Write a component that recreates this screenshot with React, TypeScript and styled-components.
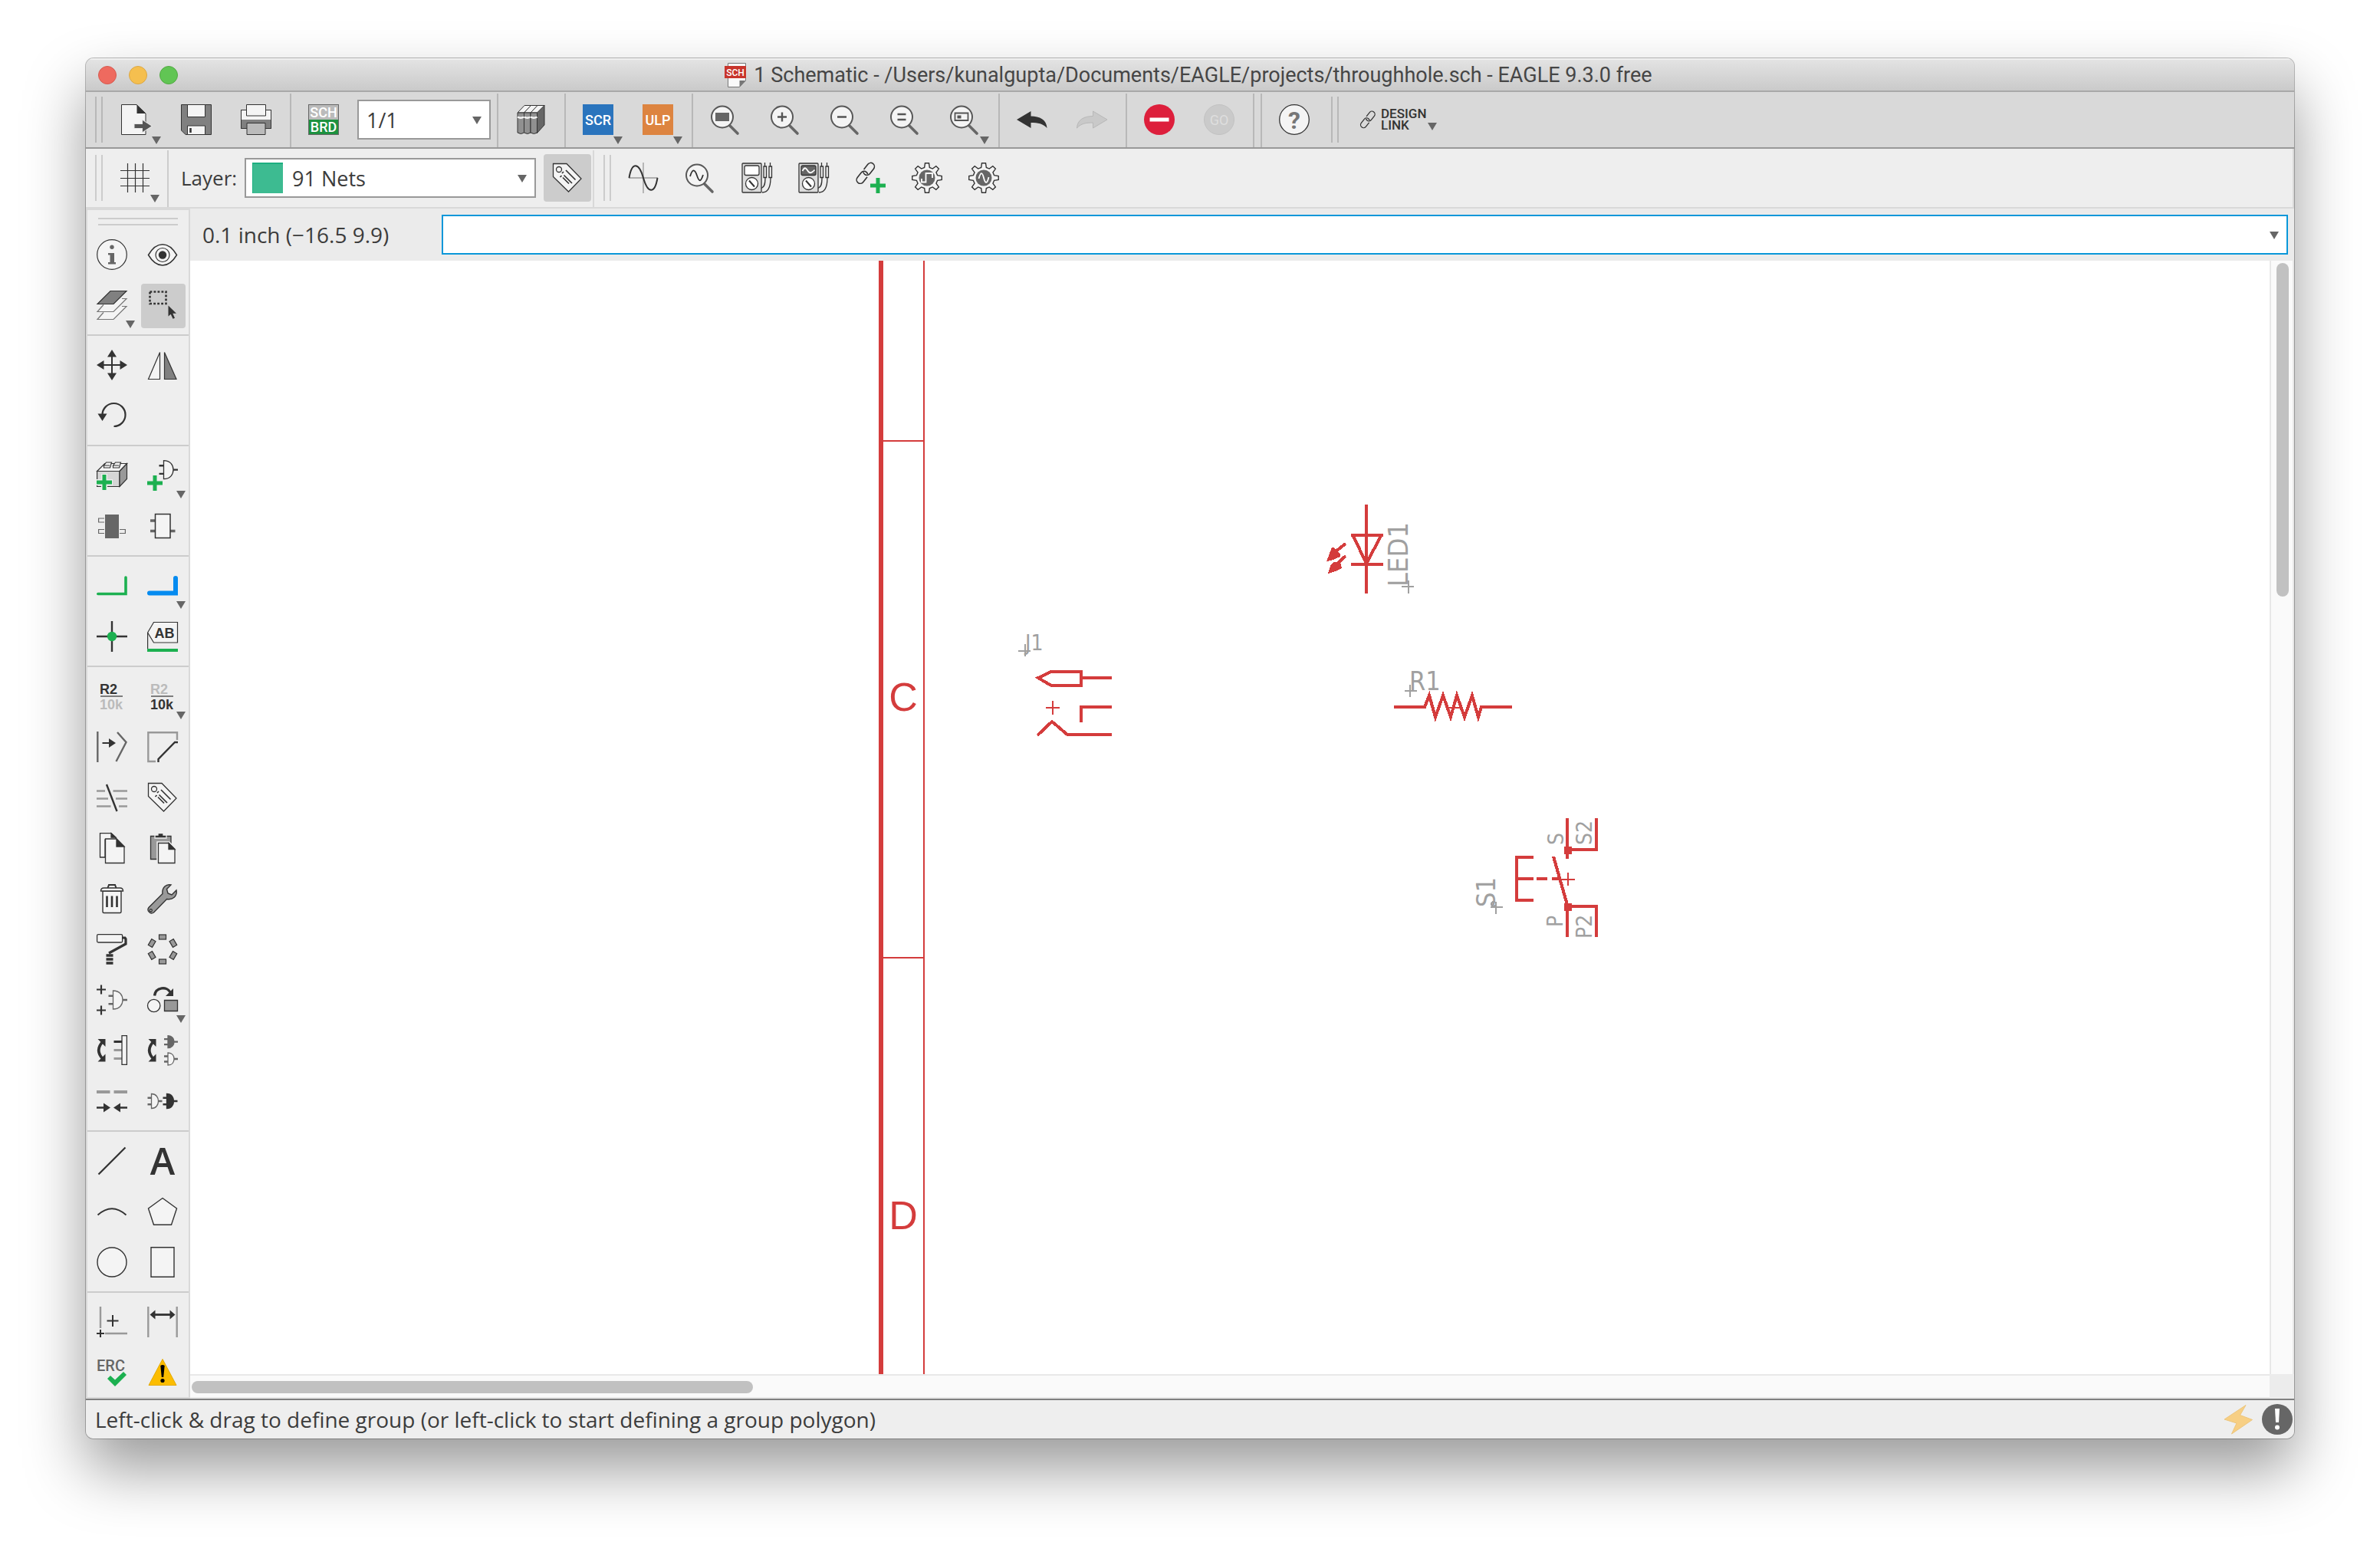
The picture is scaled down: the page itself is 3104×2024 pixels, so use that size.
import React from "react";
import styled, { createGlobalStyle, css } from "styled-components";

const UI_FONT = `"Open Sans", "Noto Sans", sans-serif`;
const TITLE_FONT = `Roboto, "Open Sans", sans-serif`;

const INK = "#333";
const MID = "#666";
const GREY = "#999";
const PAPER = "#f4f4f4";
const GREEN = "#1cb050";
const NET_RED = "#d43c3c";
const NAME_GREY = "#a0a0a0";

const GlobalStyle = createGlobalStyle`
  *, *::before, *::after { box-sizing: border-box; }
  body { margin: 0; background: #fff; font-family: ${UI_FONT}; color: #3c3c3c; }
  button, input, select { font: inherit; color: inherit; margin: 0; }
`;

/* ---------- window ---------- */

const Desktop = styled.div`
  padding: 76px 112px 148px;
`;

const Window = styled.main`
  display: flex;
  flex-direction: column;
  overflow: hidden;
  border-radius: 10px;
  background: #ececec;
  box-shadow: 0 0 0 1px rgba(0, 0, 0, 0.26), 0 40px 80px rgba(0, 0, 0, 0.4);
`;

const TitleBar = styled.header`
  display: grid;
  grid-template-columns: 1fr auto 1fr;
  align-items: center;
  height: 44px;
  padding: 2px 20px 0 16px;
  background: linear-gradient(#e4e4e4, #cacaca);
  border-bottom: 2px solid #a9a9a9;
  box-shadow: inset 0 2px 0 #f0f0f0;
`;

const TrafficLights = styled.div`
  display: flex;
  gap: 16px;
`;

const TrafficLight = styled.button<{ $fill: string; $edge: string }>`
  width: 24px;
  height: 24px;
  padding: 0;
  border-radius: 50%;
  background: ${(p) => p.$fill};
  border: 1px solid ${(p) => p.$edge};
`;

const Title = styled.h1`
  display: flex;
  align-items: center;
  gap: 10px;
  margin: 0;
  font: 400 27px/36px ${TITLE_FONT};
  color: #464646;
  white-space: nowrap;
`;

/* ---------- toolbars ---------- */

const ActionBar = styled.div`
  display: flex;
  align-items: center;
  height: 74px;
  background: #d9d9d9;
  border-bottom: 2px solid #999;
  color: #b8b8b8;
`;

const ParameterBar = styled.div`
  display: flex;
  align-items: center;
  height: 78px;
  background: #eee;
  border: 2px solid #d9d9d9;
  border-top: 0;
  border-left-width: 0;
  color: #ccc;
`;

const Grip = styled.span`
  flex: none;
  width: 10px;
  height: 60px;
  margin-left: 12px;
  border: solid currentColor;
  border-width: 0 2px;
`;

const Rule = styled.span`
  flex: none;
  align-self: stretch;
  width: 2px;
  margin-top: 2px;
  background: currentColor;
`;

const SectionRule = styled(Rule)`
  margin-left: 2px;
  background: #d9d9d9;
`;

const ButtonGroup = styled.div<{ $gap?: number }>`
  display: flex;
  align-items: center;
  gap: ${(p) => p.$gap ?? 38}px;
  padding: 0 24px 0 22px;
`;

const HelpGroup = styled(ButtonGroup)`
  padding-right: 16px;
`;

const FirstGroup = styled(ButtonGroup)`
  padding-left: 24px;
`;

const GridGroup = styled(ButtonGroup)`
  padding-right: 22px;
`;

const SheetGroup = styled(ButtonGroup)`
  padding-right: 8px;
`;

const Spacer = styled.span`
  width: 8px;
`;

const LayerGroup = styled.div`
  display: flex;
  align-items: center;
  gap: 10px;
  padding-left: 16px;
`;

const FieldLabel = styled.label`
  font-size: 26px;
  line-height: 36px;
  color: #3c3c3c;
`;

const ToolButton = styled.button<{ $pressed?: boolean }>`
  position: relative;
  flex: none;
  width: 40px;
  height: 40px;
  padding: 0;
  border: 0;
  background: none;

  svg { display: block; position: relative; }

  ${(p) => p.$pressed && css`
    &::before {
      content: "";
      position: absolute;
      inset: -8px -10px -10px -8px;
      border-radius: 4px;
      background: #ccc;
    }
  `}
`;

const TagButton = styled.button`
  display: grid;
  place-items: center;
  width: 62px;
  height: 62px;
  padding: 0;
  border: 0;
  border-radius: 4px;
  background: #ccc;
`;

const Caret = styled.span<{ $x?: number; $y?: number }>`
  position: absolute;
  left: ${(p) => p.$x ?? 40}px;
  top: ${(p) => p.$y ?? 42}px;
  border: solid transparent;
  border-width: 10px 6px 0;
  border-top-color: ${MID};
  pointer-events: none;
`;

const SelectBox = styled.div<{ $width: number }>`
  position: relative;
  width: ${(p) => p.$width}px;
  height: 52px;
`;

const SelectField = styled.select<{ $indent: number }>`
  appearance: none;
  width: 100%;
  height: 100%;
  padding: 0 40px 0 ${(p) => p.$indent}px;
  border: 2px solid #999;
  border-radius: 0;
  background: #fff;
  font-size: 27px;
  color: #3c3c3c;
`;

const FieldCaret = styled(Caret)`
  left: auto;
  right: 12px;
  top: 22px;
`;

const Swatch = styled.span`
  position: absolute;
  left: 10px;
  top: 6px;
  width: 40px;
  height: 40px;
  background: #3dbb91;
  border: solid #1caf80;
  border-width: 2px 0 0 1px;
  pointer-events: none;
`;

const DesignLink = styled.button`
  position: relative;
  display: flex;
  align-items: center;
  gap: 5px;
  margin-left: 26px;
  padding: 0;
  border: 0;
  background: none;
  font: 500 17px/15px ${TITLE_FONT};
  text-align: left;
  color: ${INK};
`;

/* ---------- work area ---------- */

const Workspace = styled.div`
  display: flex;
`;

const Palette = styled.nav`
  flex: none;
  width: 136px;
  padding-top: 10px;
  background: #eee;
  border: 2px solid #d9d9d9;
`;

const PaletteGrip = styled.span`
  display: block;
  width: 104px;
  height: 10px;
  margin: 0 14px;
  border: solid #ccc;
  border-width: 2px 0;
`;

const PaletteGroup = styled.div`
  display: grid;
  grid-template-columns: 40px 40px;
  gap: 26px;
  padding: 18px 12px;

  & + & { border-top: 2px solid #ccc; }
  &:last-child { padding-bottom: 12px; }
`;

const Editor = styled.section`
  flex: 1;
  min-width: 0;
  display: flex;
  flex-direction: column;
`;

const CommandRow = styled.div`
  display: flex;
  align-items: center;
  height: 68px;
  padding-right: 8px;
  background: #ebebeb;
`;

const Coordinates = styled.output`
  flex: none;
  width: 328px;
  padding-left: 16px;
  font-size: 28px;
  line-height: 68px;
`;

const CommandBox = styled.div`
  position: relative;
  flex: 1;
  height: 52px;
`;

const CommandInput = styled.input`
  width: 100%;
  height: 100%;
  padding: 0 40px 0 10px;
  border: 2px solid #0a97d9;
  border-radius: 0;
  outline: 0;
  background: #fff;
  font-size: 27px;
`;

const Viewport = styled.div`
  flex: 1;
  display: grid;
  grid-template-columns: 1fr 32px;
  grid-template-rows: 1fr 32px;
`;

const Canvas = styled.div`
  position: relative;
  background: #fff;
`;

const Drawing = styled.svg`
  position: absolute;
  inset: 0;
  width: 100%;
  height: 100%;
`;

const VerticalTrack = styled.div`
  padding: 3px 5px 0 7px;
  background: #fafafa;
  border: solid #e8e8e8;
  border-width: 0 2px;
`;

const HorizontalTrack = styled.div`
  padding: 7px 0 0 2px;
  background: #fafafa;
  border: solid #e8e8e8;
  border-width: 2px 0;
`;

const Thumb = styled.div<{ $vertical?: boolean }>`
  width: ${(p) => (p.$vertical ? "16px" : "27%")};
  height: ${(p) => (p.$vertical ? "30%" : "16px")};
  border-radius: 8px;
  background: #c1c1c1;
`;

const StatusBar = styled.footer`
  display: flex;
  align-items: center;
  gap: 10px;
  height: 52px;
  padding: 0 2px 0 12px;
  background: #eee;
  border-top: 2px solid #808080;
  font-size: 28px;
  line-height: 36px;
`;

const StatusText = styled.span`
  flex: 1;
  white-space: nowrap;
`;

/* ---------- icons ---------- */

const IconSvg = styled.svg`
  overflow: visible;
`;

const Plus = ({ x, y, r = 10, w = 5, color = GREEN }: { x: number; y: number; r?: number; w?: number; color?: string }) => (
  <path d={`M${x - r} ${y}h${2 * r}M${x} ${y - r}v${2 * r}`} stroke={color} strokeWidth={w} fill="none" />
);

/* AND gate: body of width w and height h at x, two input pins and one output pin */
const Gate = ({ x, y, w = 12.5, h = 24, body = PAPER, line = MID, pin = 6 }: { x: number; y: number; w?: number; h?: number; body?: string; line?: string; pin?: number }) => (
  <g stroke={line}>
    <path
      d={`M${x - pin} ${y + h * 0.28}H${x}M${x - pin} ${y + h * 0.72}H${x}M${x + w} ${y + h / 2}h${pin}`}
      strokeWidth="2.4"
    />
    <path
      d={`M${x} ${y}c${w * 0.7} 0 ${w} ${h * 0.25} ${w} ${h / 2}s${-w * 0.3} ${h / 2} ${-w} ${h / 2}z`}
      fill={body}
      strokeWidth="1.3"
    />
  </g>
);

const Lens = ({ children }: { children?: React.ReactNode }) => (
  <>
    <path d="M26 28l10 10" stroke={MID} strokeWidth="3.6" strokeLinecap="round" />
    <circle cx="16" cy="16.5" r="14" fill={PAPER} stroke="#585858" strokeWidth="2" />
    {children}
  </>
);

const gearPath = (() => {
  const pts: string[] = [];
  for (let i = 0; i < 8; i++) {
    const a = (i * Math.PI) / 4 - Math.PI / 2;
    const corners: [number, number][] = [
      [14, -0.24],
      [19.4, -0.13],
      [19.4, 0.13],
      [14, 0.24],
    ];
    corners.forEach(([r, d]) => pts.push(`${(20 + r * Math.cos(a + d)).toFixed(2)} ${(20 + r * Math.sin(a + d)).toFixed(2)}`));
  }
  return `M${pts.join("L")}Z`;
})();

const Gear = ({ children }: { children: React.ReactNode }) => (
  <>
    <path d={gearPath} fill={PAPER} stroke={INK} strokeWidth="1.4" />
    <circle cx="20" cy="20" r="10.5" fill={MID} />
    {children}
  </>
);

const Meter = ({ digital }: { digital?: boolean }) => (
  <g fill="none" stroke={INK} strokeWidth="1.3">
    <rect x="1" y="1" width="25" height="38" rx="1" fill="#dcdcdc" />
    <rect x="4" y="4" width="19" height="12.5" rx="2" fill={digital ? MID : "#fff"} />
    {digital && <path d="M5.5 11c4-8 6-1 8 1s4 2 8-2.5" stroke="#fff" strokeWidth="1.8" />}
    <circle cx="13.5" cy="27.5" r="8" fill="#fff" />
    <path d="M10 23.5l7 8" strokeWidth="2" />
    <path d="M30.5 0v5M29 5h3.500v14.500H29zM37.500 0v5M36 5h3.500v14.500H36z" />
    <path d="M31 20c0 8-1 12-5 13.500M38 20c0 12-3 19-11 19" />
  </g>
);

const Chain = () => (
  <g transform="rotate(-52 14 14)" fill="none" stroke={INK} strokeWidth="1.600">
    <path d="M11.500 18.500H3a4.800 4.800 0 0 1 0-9.600h8a4.800 4.800 0 0 1 4.800 4.800q0 2-1.300 3.300" />
    <path d="M16.500 9H25a4.800 4.800 0 0 1 0 9.600h-8a4.800 4.800 0 0 1-4.800-4.800q0-2 1.300-3.300" />
  </g>
);

const RoundArrow = () => (
  <g fill={INK}>
    <path d="M8.500 8Q-3 19.500 8.500 31.500" fill="none" stroke={INK} strokeWidth="3.6" />
    <path d="M1.500 5h10v10zM1.500 34.500h10v-10z" />
  </g>
);

const Badge = ({ fill, text }: { fill: string; text: string }) => (
  <>
    <rect width="40" height="40" fill={fill} />
    <text x="20" y="26.5" fontFamily={TITLE_FONT} fontWeight="500" fontSize="18" textAnchor="middle" fill="#fff">{text}</text>
  </>
);

const NameValue = ({ top, bottom }: { top: string; bottom: string }) => (
  <g fontFamily="'Liberation Sans', Arial, sans-serif" fontWeight="700" fontSize="18">
    <text x="4" y="16.5" fill={top}>R2</text>
    <path d="M5 20h29" stroke={INK} strokeWidth="1.2" />
    <text x="4" y="37" fill={bottom}>10k</text>
  </g>
);

const tagShape = (
  <g stroke={INK} fill="none">
    <path d="M1.500 1.500H19L38 21 21.500 38 1.500 18.500z" fill={PAPER} strokeWidth="1.3" />
    <circle cx="9" cy="9" r="3.5" strokeWidth="1.3" />
    <path d="M18 10l12.500 12.500M13 14l2-2M15.500 16.500L26 27M10.500 19l2-2M14 19.500l8 8" strokeWidth="1.7" />
  </g>
);

const undoPath = "M0 20L18.500 9v6.500C30 15.500 39 20 39.500 31 34 25 28 24 18.500 24v7z";

const icons: Record<string, React.ReactNode> = {
  open: (
    <>
      <path d="M.5.5H20L32 12v27.500H.5z" fill={PAPER} stroke={INK} />
      <path d="M20.500.5V12H32z" fill={INK} />
      <path d="M17.500 26H28v-5l11.500 7.500L28 36v-5H17.500z" fill="#555" stroke="#e6e6e6" strokeWidth="2" paintOrder="stroke" />
    </>
  ),
  save: (
    <g stroke={INK}>
      <path d="M.5.5h39v39H6L.5 34z" fill="#808080" />
      <path d="M8.500.5h23v16h-23zM8.500 28h23v11.500h-23z" fill={PAPER} />
      <path d="M12.500 31v6" strokeWidth="2.6" />
    </g>
  ),
  print: (
    <g stroke={INK}>
      <path d="M.5 7.500h39v24H.5z" fill={PAPER} />
      <path d="M.5 20h39v11.500H.5z" fill="#808080" stroke="none" />
      <path d="M.5 7.500h39v24H.5z" fill="none" />
      <path d="M7.500.5h25V15h-25z" fill={PAPER} />
      <path d="M8 24.500h24v15H8z" fill="#bbb" />
    </g>
  ),
  board: (
    <>
      <path d="M.5.5h39V20H.5z" fill="#bbb" />
      <path d="M.5 20h39v19.500H.5z" fill="#1d9240" />
      <rect x=".5" y=".5" width="39" height="39" fill="none" stroke={MID} />
      <g fontFamily={TITLE_FONT} fontWeight="500" fontSize="18" fill="#fff" textAnchor="middle">
        <text x="20" y="17">SCH</text>
        <text x="20" y="36">BRD</text>
      </g>
    </>
  ),
  library: (
    <g stroke={INK}>
      <path d="M28 11l10-10v26L28 38z" fill={MID} />
      {[3, 11.5, 20].map((x) => (
        <g key={x}>
          <path d={`M${x} 11l9-9.500h9L${x + 8.5} 11z`} fill={PAPER} />
          <path d={`M${x} 11h8.500v26q-4 3-8.500 0z`} fill="#909090" />
          <path d={`M${x} 16.500q4 2.500 8.500 0`} stroke={PAPER} strokeWidth="2.5" fill="none" />
        </g>
      ))}
    </g>
  ),
  scr: <Badge fill="#2a74bd" text="SCR" />,
  ulp: <Badge fill="#dd8440" text="ULP" />,
  zoomFit: <Lens><path d="M7 11h18v11H7z" fill={MID} /></Lens>,
  zoomIn: <Lens><Plus x={16} y={16.5} r={6} w={2.4} color="#555" /></Lens>,
  zoomOut: <Lens><path d="M10 16.500h12" stroke="#555" strokeWidth="2.4" /></Lens>,
  zoomRedraw: <Lens><path d="M10.500 13h11M10.500 20h11" stroke="#555" strokeWidth="2.4" /></Lens>,
  zoomSelect: (
    <Lens>
      <path d="M7.500 11.500h17v9.500h-17z" fill={PAPER} stroke="#555" strokeWidth="1.8" />
      <path d="M10.500 14.500h5v4h-5z" fill="#555" />
    </Lens>
  ),
  undo: <path d={undoPath} fill={INK} />,
  redo: <path d={undoPath} transform="matrix(-1 0 0 1 40 0)" fill="#c9c9c9" stroke="#b8b8b8" />,
  stop: (
    <>
      <circle cx="20" cy="20" r="20" fill="#dd1f3c" />
      <path d="M7.500 20h25" stroke="#fff" strokeWidth="5" />
    </>
  ),
  go: (
    <>
      <circle cx="20" cy="20" r="19.5" fill="#cacaca" stroke="#c2c2c2" />
      <text x="20" y="27" fontFamily={TITLE_FONT} fontSize="18" textAnchor="middle" fill="#dedede">GO</text>
    </>
  ),
  help: (
    <>
      <circle cx="20" cy="20" r="19.3" fill={PAPER} stroke={INK} strokeWidth="1.3" />
      <text x="20" y="31.5" fontFamily={TITLE_FONT} fontWeight="700" fontSize="32" textAnchor="middle" fill="#777">?</text>
    </>
  ),
  grid: <path d="M10.500 1v38M20.500 1v38M30.500 1v38M1 10.500h38M1 20.500h38M1 30.500h38" stroke={INK} strokeWidth="1.2" />,
  tag: tagShape,
  sine: (
    <g fill="none">
      <path d="M20 0v40M1 20h38" stroke={GREY} strokeWidth="1.3" />
      <path d="M1.500 20C5-1 14-1 20 20s15 21 18.500 0" stroke={INK} strokeWidth="2" />
    </g>
  ),
  probe: <Lens><path d="M7 18c3-10 6-10 9-1s5 8 8-1" fill="none" stroke={INK} strokeWidth="1.8" /></Lens>,
  meter: <Meter />,
  scope: <Meter digital />,
  addLink: (
    <>
      <Chain />
      <Plus x={30} y={30} />
    </>
  ),
  gearDigital: <Gear><path d="M13 21v4.500h5.500V14h4v0h4.500v6h0" fill="none" stroke="#fff" strokeWidth="1.8" /></Gear>,
  gearAnalog: <Gear><path d="M13.500 21c2.500-9 4.500-9 6.500-1s4.500 8 6.500-1" fill="none" stroke="#fff" strokeWidth="1.8" /></Gear>,

  info: (
    <>
      <circle cx="20" cy="20" r="19.3" fill={PAPER} stroke={INK} strokeWidth="1.2" />
      <g fill={MID}>
        <circle cx="20" cy="10.2" r="2.7" />
        <path d="M15 18h8v12h2v2.500H15V30h2.500v-9.500H15z" />
      </g>
    </>
  ),
  show: (
    <g stroke={INK} fill="none">
      <path d="M1.500 20.500C7 11 13 6.700 20 6.700s13 4.300 18.500 13.800C33 29.700 27 34 20 34S7 29.700 1.500 20.500z" fill={PAPER} strokeWidth="1.5" />
      <circle cx="20" cy="20.5" r="9" strokeWidth="1.2" />
      <circle cx="20" cy="20.5" r="5.2" fill={INK} stroke="none" />
    </g>
  ),
  layers: (
    <g stroke="#777" strokeWidth="1.2" fill={PAPER}>
      <path d="M9 29.500L1 38.500h21l17-17h-6" />
      <path d="M9 19.500L1 28.500h21l17-17h-6" />
      <path d="M1 18.500l17-17h21l-17 17z" fill="#808080" stroke={INK} />
    </g>
  ),
  group: (
    <>
      <rect x="3.5" y="2.5" width="21" height="15.5" fill="none" stroke={INK} strokeWidth="2.6" strokeDasharray="2.8 2.2" />
      <path d="M27.500 20.500v14l3.200-2.800 2.800 6.100 2.500-1-2.700-6H38z" fill={INK} />
    </>
  ),
  move: (
    <>
      <path d="M20 6v28M6 20h28" stroke={INK} strokeWidth="2" />
      <path d="M20 0l6 9.500H14zM20 40l6-9.500H14zM0 20l9.500-6v12zM40 20l-9.500-6v12z" fill={INK} />
    </>
  ),
  mirror: (
    <g stroke={INK} strokeWidth="1.2">
      <path d="M1.500 38.500h15v-35z" fill={PAPER} />
      <path d="M38 38.500H22.500v-35z" fill="#808080" />
    </g>
  ),
  rotate: (
    <>
      <path d="M22.500 34A15 15 0 1 0 7.500 19" fill="none" stroke={INK} strokeWidth="2.2" />
      <path d="M1.500 17.500h12L7.500 27z" fill={INK} />
    </>
  ),
  addPart: (
    <>
      <g stroke={INK} strokeWidth="1.2">
        <path d="M.6 14.500h29.400v20H.6z" fill="#d6d6d6" />
        <path d="M.6 14.500l10-10h29l-9.600 10z" fill={PAPER} />
        <path d="M30 14.500l9.500-10v20L30 34.500z" fill={GREY} />
        <path d="M9.500 7l3-4h7l-2 7h-8zM21.500 7l3-4h7l-2 7h-8zM9.500 7h7.500M21.500 7h7.500" fill={PAPER} />
      </g>
      <Plus x={10} y={29} w={8} r={11} color="#eee" />
      <Plus x={10} y={29} />
    </>
  ),
  addGate: (
    <>
      <Gate x={21.5} y={0.6} line={INK} />
      <Plus x={10} y={30} />
    </>
  ),
  chipDark: (
    <g stroke={MID} strokeWidth="1.2" fill="none">
      <path d="M10 10H2.600v5H10M10 24.500H2.600v5H10M30 24.500h7.400v5H30" />
      <path d="M11 5h18v31H11z" fill={MID} stroke="none" />
    </g>
  ),
  chipLight: (
    <>
      <path d="M4 13h6.500M4 26.500h6.500M30 26.500h6.500" stroke={MID} strokeWidth="3.6" />
      <path d="M10.500 4.500H30v31H10.500z" fill={PAPER} stroke={INK} strokeWidth="1.5" />
    </>
  ),
  net: <path d="M1.800 30.500H38V9" fill="none" stroke={GREEN} strokeWidth="3.6" strokeLinecap="round" />,
  bus: <path d="M3 29.500h34V10" fill="none" stroke="#058bf0" strokeWidth="6" strokeLinecap="round" />,
  junction: (
    <>
      <Plus x={20} y={20} r={20} w={2.4} color={INK} />
      <circle cx="20" cy="20" r="6.2" fill={GREEN} />
    </>
  ),
  label: (
    <>
      <path d="M8.500 1.500h31v26.500h-31L.6 15z" fill={PAPER} stroke={INK} strokeWidth="1.2" />
      <path d="M.6 15v21" stroke={INK} strokeWidth="1.2" />
      <path d="M0 38h40" stroke={GREEN} strokeWidth="4" />
      <text x="22.5" y="22" fontFamily="'Liberation Sans', Arial, sans-serif" fontWeight="700" fontSize="18" textAnchor="middle" fill={INK}>AB</text>
    </>
  ),
  name: <NameValue top={INK} bottom="#bbb" />,
  value: <NameValue top="#bbb" bottom={INK} />,
  smash: (
    <g fill="none" stroke={MID} strokeWidth="2.4">
      <path d="M1.300 0v40M27 1l11.500 13L25.500 39" />
      <path d="M7.500 15H17" stroke={INK} strokeWidth="2" />
      <path d="M16 9l9 6-9 6z" fill={INK} stroke="none" />
    </g>
  ),
  miter: (
    <g fill="none" strokeWidth="2.4">
      <path d="M39 11V1.300H1.300V39H11" stroke={GREY} />
      <path d="M14.500 40v-4L36 14h4" stroke={INK} />
    </g>
  ),
  split: (
    <g strokeWidth="2.4">
      <path d="M0 11.500h11M21.500 11.500H40M0 21.500h15M25 21.500h15M0 31.500h18.500M29 31.500h11" stroke={GREY} />
      <path d="M13 3l13.500 35" stroke={INK} />
    </g>
  ),
  copy: (
    <g fill={PAPER} stroke={INK} strokeWidth="1.3">
      <path d="M10 32H4.500V.7H19l6 5.500V9H11v23z" />
      <path d="M19 .7v5.500h6z" fill={INK} />
      <path d="M11.500 8H26l10 10v21.500H11.500z" />
      <path d="M26 8v10h10z" fill={INK} />
    </g>
  ),
  paste: (
    <g stroke={INK} strokeWidth="1.3">
      <path d="M4.500 4.500H31V34.500H4.500z" fill={GREY} />
      <path d="M10 7V3h4V.5h7V3h4v4z" fill={INK} stroke="#eee" />
      <path d="M14.500 13.500H28l8 8v18H14.500z" fill={PAPER} stroke="#eee" strokeWidth="4.5" />
      <path d="M14.500 13.500H28l8 8v18H14.500z" fill={PAPER} />
      <path d="M28 13.500v8h8z" fill={INK} />
    </g>
  ),
  trash: (
    <g fill={PAPER} stroke={INK} strokeWidth="1.4">
      <path d="M14.500 6l1.500-4h8l1.500 4" fill="none" strokeWidth="2" />
      <path d="M8 10v27q0 1.500 1.500 1.500h21q1.500 0 1.500-1.500V10z" />
      <path d="M5.500 10q0-4 4-4h21q4 0 4 4z" />
      <path d="M13.500 16.500V31M20 16.500V31M26.500 16.500V31" strokeWidth="2.6" />
    </g>
  ),
  wrench: (
    <g stroke={INK} strokeWidth="1.4">
      <path d="M31 2C25 .5 19 5 20 13.500L2 31.500c-3 4 2 9.500 6.500 6.500L25.500 20.500C33 22 39.500 17 38 9l-6 6-5-2-1.500-5.500z" fill={GREY} />
      <circle cx="4.8" cy="35.2" r="1.5" fill={PAPER} />
    </g>
  ),
  paint: (
    <g stroke={INK}>
      <rect x=".6" y=".6" width="33" height="10.4" rx="1.5" fill={PAPER} strokeWidth="1.3" />
      <path d="M34 5h3l1 1.500V13L16 25" fill="none" strokeWidth="3.2" />
      <path d="M12.500 28h9M12.500 33h9M12.500 38h9" strokeWidth="3.6" />
    </g>
  ),
  ring: (
    <g fill={GREY} stroke={INK} strokeWidth="1.2">
      {[0, 60, 120, 180, 240, 300].map((a) => (
        <rect key={a} x="15.5" y="1" width="9" height="6" transform={`rotate(${a} 20 20)`} />
      ))}
    </g>
  ),
  addInvoke: (
    <>
      <Plus x={6} y={6.5} r={6} w={2.2} color={INK} />
      <Plus x={6} y={33.5} r={6} w={2.2} color={INK} />
      <Gate x={21.5} y={8} />
    </>
  ),
  replace: (
    <g stroke={INK}>
      <circle cx="8.7" cy="27.5" r="8.2" fill={PAPER} strokeWidth="1.3" />
      <path d="M22.500 20.500h17v14h-17z" fill={GREY} strokeWidth="1.3" />
      <path d="M9.500 14.500C11 3 26 2 30 10" fill="none" strokeWidth="3.4" />
      <path d="M34 5v10H24z" fill={INK} stroke="none" />
    </g>
  ),
  pinSwap: (
    <>
      <RoundArrow />
      <path d="M22.500 8.500H33" stroke={INK} strokeWidth="3" />
      <path d="M22.500 19.500H33M22.500 30.500H33" stroke={GREY} strokeWidth="3" />
      <path d="M33 .7h6.400v37.600H33z" fill={PAPER} stroke={INK} strokeWidth="1.3" />
    </>
  ),
  gateSwap: (
    <>
      <RoundArrow />
      <Gate x={27} y={0.6} w={8} h={16} body={MID} pin={5} />
      <Gate x={27} y={23} w={8} h={16} pin={5} />
    </>
  ),
  optimize: (
    <>
      <path d="M0 8h17.500M22.500 8H40" stroke={GREY} strokeWidth="4" />
      <path d="M0 28.500h10M30 28.500h10" stroke={INK} strokeWidth="2.4" />
      <path d="M9 22.500l9 6-9 6zM31 22.500l-9 6 9 6z" fill={INK} />
    </>
  ),
  gates: (
    <>
      <Gate x={5.5} y={10.5} w={9} h={19} pin={5} />
      <Gate x={25.5} y={10.5} w={9} h={19} body={INK} line={INK} pin={5} />
    </>
  ),
  line: <path d="M2.500 37.500l35-35" stroke={INK} strokeWidth="2.2" />,
  text: <text x="20" y="37.5" fontFamily={UI_FONT} fontWeight="600" fontSize="49" textAnchor="middle" fill={INK}>A</text>,
  arc: <path d="M1.500 24.500Q20 8 38.500 24.500" fill="none" stroke={INK} strokeWidth="2" />,
  polygon: <path d="M20 2.500L38.500 16l-7 21.300h-23L1.500 16z" fill={PAPER} stroke={INK} strokeWidth="1.4" />,
  circle: <circle cx="20" cy="20" r="19" fill={PAPER} stroke={INK} strokeWidth="1.4" />,
  rect: <path d="M5 .7h30v38.600H5z" fill={PAPER} stroke={INK} strokeWidth="1.4" />,
  mark: (
    <>
      <path d="M5 0v28M11 35h29" stroke={GREY} strokeWidth="2.4" />
      <Plus x={5} y={35} r={5} w={2} color={INK} />
      <Plus x={21} y={18.5} r={7.5} w={2} color={INK} />
    </>
  ),
  dimension: (
    <>
      <path d="M1.300 0v40M38.700 0v40" stroke={GREY} strokeWidth="2.4" />
      <path d="M9 10.500h22" stroke={INK} strokeWidth="2.8" />
      <path d="M3.500 10.500l7-6v12zM36.500 10.500l-7-6v12z" fill={INK} />
    </>
  ),
  erc: (
    <>
      <text x="0" y="17.5" fontFamily={TITLE_FONT} fontWeight="500" fontSize="20" fill={MID}>ERC</text>
      <path d="M14 28l4-4 6 5.500L35 19l4 4-15 15z" fill={GREEN} />
    </>
  ),
  errors: (
    <>
      <path d="M20 2.500l18 34H2z" fill="#fcbd00" stroke="#e3a900" strokeLinejoin="round" />
      <path d="M17.300 11q2.700-2 5.400 0L21.200 26h-2.400z" />
      <circle cx="20" cy="30.5" r="2.6" />
    </>
  ),
  bolt: <path d="M29 1.500L21.500 14.500 37.500 20.500 10.500 39 17 25 1 20z" fill="#f7cf84" stroke="#ecc57c" />,
  alert: (
    <>
      <circle cx="20" cy="20" r="20" fill={MID} />
      <path d="M17 6h6l-1 18h-4z" fill="#fff" />
      <circle cx="20" cy="30.5" r="3" fill="#fff" />
    </>
  ),
};

const Icon = ({ name }: { name: string }) => (
  <IconSvg width="40" height="40" viewBox="0 0 40 40" aria-hidden="true">{icons[name]}</IconSvg>
);

type Tool = { icon: string; label: string; menu?: boolean; pressed?: boolean; disabled?: boolean };

const ToolbarTool = ({ icon, label, menu, disabled }: Tool) => (
  <ToolButton type="button" aria-label={label} disabled={disabled}>
    <Icon name={icon} />
    {menu && <Caret />}
  </ToolButton>
);

const PaletteTool = ({ icon, label, menu, pressed }: Tool) => (
  <ToolButton type="button" aria-label={label} aria-pressed={pressed} $pressed={pressed}>
    <Icon name={icon} />
    {menu && <Caret $x={38} $y={40} />}
  </ToolButton>
);

const fileTools: Tool[] = [
  { icon: "open", label: "Open", menu: true },
  { icon: "save", label: "Save" },
  { icon: "print", label: "Print" },
];
const scriptTools: Tool[] = [
  { icon: "scr", label: "Run script", menu: true },
  { icon: "ulp", label: "Run ULP", menu: true },
];
const zoomTools: Tool[] = [
  { icon: "zoomFit", label: "Zoom to fit" },
  { icon: "zoomIn", label: "Zoom in" },
  { icon: "zoomOut", label: "Zoom out" },
  { icon: "zoomRedraw", label: "Redraw" },
  { icon: "zoomSelect", label: "Zoom select", menu: true },
];
const historyTools: Tool[] = [
  { icon: "undo", label: "Undo" },
  { icon: "redo", label: "Redo", disabled: true },
];
const runTools: Tool[] = [
  { icon: "stop", label: "Stop" },
  { icon: "go", label: "Go", disabled: true },
];
const simulationTools: Tool[] = [
  { icon: "sine", label: "Source setup" },
  { icon: "probe", label: "Add probe" },
  { icon: "meter", label: "Voltage probe" },
  { icon: "scope", label: "Phase probe" },
  { icon: "addLink", label: "Map model" },
  { icon: "gearDigital", label: "Digital simulation" },
  { icon: "gearAnalog", label: "Analog simulation" },
];

const paletteGroups: Tool[][] = [
  [
    { icon: "info", label: "Info" },
    { icon: "show", label: "Show" },
    { icon: "layers", label: "Layers", menu: true },
    { icon: "group", label: "Group", pressed: true },
  ],
  [
    { icon: "move", label: "Move" },
    { icon: "mirror", label: "Mirror" },
    { icon: "rotate", label: "Rotate" },
  ],
  [
    { icon: "addPart", label: "Add part" },
    { icon: "addGate", label: "Add gate", menu: true },
    { icon: "chipDark", label: "Add module" },
    { icon: "chipLight", label: "Add port" },
  ],
  [
    { icon: "net", label: "Net" },
    { icon: "bus", label: "Bus", menu: true },
    { icon: "junction", label: "Junction" },
    { icon: "label", label: "Label" },
  ],
  [
    { icon: "name", label: "Name" },
    { icon: "value", label: "Value", menu: true },
    { icon: "smash", label: "Slice" },
    { icon: "miter", label: "Miter" },
    { icon: "split", label: "Split" },
    { icon: "tag", label: "Attribute" },
    { icon: "copy", label: "Copy" },
    { icon: "paste", label: "Paste" },
    { icon: "trash", label: "Delete" },
    { icon: "wrench", label: "Change" },
    { icon: "paint", label: "Paint format" },
    { icon: "ring", label: "Polar array" },
    { icon: "addInvoke", label: "Invoke" },
    { icon: "replace", label: "Replace", menu: true },
    { icon: "pinSwap", label: "Pin swap" },
    { icon: "gateSwap", label: "Gate swap" },
    { icon: "optimize", label: "Optimize" },
    { icon: "gates", label: "Link gates" },
  ],
  [
    { icon: "line", label: "Line" },
    { icon: "text", label: "Text" },
    { icon: "arc", label: "Arc" },
    { icon: "polygon", label: "Polygon" },
    { icon: "circle", label: "Circle" },
    { icon: "rect", label: "Rectangle" },
  ],
  [
    { icon: "mark", label: "Mark" },
    { icon: "dimension", label: "Dimension" },
    { icon: "erc", label: "Electrical rule check" },
    { icon: "errors", label: "Errors" },
  ],
];

/* ---------- schematic ---------- */

const PartName = styled.text<{ $size: number }>`
  font: 200 ${(p) => p.$size}px "DejaVu Sans Condensed", "DejaVu Sans", sans-serif;
  fill: ${NAME_GREY};
`;

const FrameLetter = styled.text`
  font: 400 52px "Liberation Sans", Arial, sans-serif;
  fill: ${NET_RED};
  text-anchor: middle;
`;

const Upright = ({ x, y, size, children }: { x: number; y: number; size: number; children: string }) => (
  <PartName $size={size} transform={`translate(${x} ${y}) rotate(-90)`}>{children}</PartName>
);

const Schematic = () => (
  <Drawing role="img" aria-label="Schematic sheet">
    <g transform="translate(-248 -340)" fill="none" stroke={NET_RED} strokeWidth="4">
      <g shapeRendering="crispEdges">
        <path d="M1149 340v1600" strokeWidth="6" />
        <path d="M1205 340v1600M1152 575h53M1152 1249h53" strokeWidth="2" />
      </g>
      <g stroke="none">
        <FrameLetter x="1178" y="927">C</FrameLetter>
        <FrameLetter x="1178" y="1603">D</FrameLetter>
        <PartName $size={28} x="1337" y="848">J1</PartName>
        <PartName $size={34} x="1838" y="900">R1</PartName>
        <Upright x={1836} y={765} size={36}>LED1</Upright>
        <Upright x={1950} y={1183} size={34}>S1</Upright>
        <Upright x={2039} y={1102} size={28}>S</Upright>
        <Upright x={2076} y={1102} size={28}>S2</Upright>
        <Upright x={2038} y={1209} size={28}>P</Upright>
        <Upright x={2076} y={1224} size={28}>P2</Upright>
      </g>
      <g shapeRendering="crispEdges">
        <path d="M1328 849h16M1337 840v16M1828 765h16M1837 757v17M1832 901h16M1839 893v16M1944 1183h16M1951 1176v16" stroke={NAME_GREY} strokeWidth="2" />
        <circle cx="1948" cy="1179" r="3" stroke={NAME_GREY} strokeWidth="2" />

        <path d="M1410 876h-39l-17 8 17 10h39zM1410 884h40M1450 922h-40v20M1353 959l19-18 20 17h58" />
        <path d="M1364 923h18M1373 914v18" strokeWidth="2" />

        <path d="M1782 658v116M1762 698h42M1762 736h42M1765 699l17 36 19-36M1755 709l-13 10M1755 725l-12 11" />
        <path d="M1730 732l7-18h3l8 9v3l-12 5zM1732 748l3-10 4-5h9l2 8-8 4z" fill={NET_RED} stroke="none" />

        <path d="M1818 922h40l6-15 8 28 10-28 10 28 8-28 10 28 10-28 8 28 4-13h40" />
        <path d="M1889 923h16" strokeWidth="2" />

        <path d="M2044 1067v53M2044 1108h38v-41M2044 1222v-40h38v40M2026 1117l18 63" />
        <path d="M2000 1118h-22v56h22M1978 1146h22M2004 1146h14M2024 1146h12" />
        <path d="M2034 1147h20M2045 1138v17" strokeWidth="2" />
        <path d="M2040 1104h10v10h-10zM2040 1178h10v10h-10z" fill={NET_RED} stroke="none" />
      </g>
    </g>
  </Drawing>
);

const SheetIcon = () => (
  <svg width="28" height="32" viewBox="0 0 28 32" aria-hidden="true">
    <path d="M4.500.5h23V23l-8 8.500h-15z" fill="#fafafa" stroke="#777" />
    <path d="M19.500 31.500V23h8z" fill="#777" />
    <path d="M0 4h28v16H0z" fill="#c8352c" />
    <text x="14" y="16.5" fontFamily={TITLE_FONT} fontSize="12" fontWeight="500" textAnchor="middle" fill="#fff">SCH</text>
  </svg>
);

export default function App() {
  return (
    <Desktop>
      <GlobalStyle />
      <Window>
        <TitleBar>
          <TrafficLights>
            <TrafficLight type="button" aria-label="Close" $fill="#ee6a5f" $edge="#d65a50" />
            <TrafficLight type="button" aria-label="Minimize" $fill="#f5bf4f" $edge="#dba744" />
            <TrafficLight type="button" aria-label="Zoom" $fill="#61c554" $edge="#52a943" />
          </TrafficLights>
          <Title>
            <SheetIcon />
            1 Schematic - /Users/kunalgupta/Documents/EAGLE/projects/throughhole.sch - EAGLE 9.3.0 free
          </Title>
        </TitleBar>

        <ActionBar role="toolbar" aria-label="Actions">
          <Grip />
          <FirstGroup>{fileTools.map((t) => <ToolbarTool key={t.icon} {...t} />)}</FirstGroup>
          <Rule />
          <SheetGroup $gap={24}>
            <ToolbarTool icon="board" label="Switch to board" />
            <SelectBox $width={174}>
              <SelectField $indent={10} aria-label="Sheet" defaultValue="1">
                <option value="1">1/1</option>
              </SelectField>
              <FieldCaret />
            </SelectBox>
          </SheetGroup>
          <Rule />
          <ButtonGroup><ToolbarTool icon="library" label="Libraries" /></ButtonGroup>
          <Rule />
          <ButtonGroup>{scriptTools.map((t) => <ToolbarTool key={t.icon} {...t} />)}</ButtonGroup>
          <Rule />
          <ButtonGroup>{zoomTools.map((t) => <ToolbarTool key={t.icon} {...t} />)}</ButtonGroup>
          <Rule />
          <ButtonGroup>{historyTools.map((t) => <ToolbarTool key={t.icon} {...t} />)}</ButtonGroup>
          <Rule />
          <ButtonGroup>{runTools.map((t) => <ToolbarTool key={t.icon} {...t} />)}</ButtonGroup>
          <Rule />
          <Spacer />
          <Rule />
          <HelpGroup><ToolbarTool icon="help" label="Help" /></HelpGroup>
          <Grip />
          <DesignLink type="button">
            <svg width="24" height="24" viewBox="-1 -1 30 30" aria-hidden="true"><Chain /></svg>
            <span>DESIGN<br />LINK</span>
            <Caret $x={90} $y={19} />
          </DesignLink>
        </ActionBar>

        <ParameterBar role="toolbar" aria-label="Parameters">
          <Grip />
          <GridGroup><ToolbarTool icon="grid" label="Grid" menu /></GridGroup>
          <Rule />
          <LayerGroup>
            <FieldLabel htmlFor="layer">Layer:</FieldLabel>
            <SelectBox $width={380}>
              <SelectField id="layer" $indent={60} defaultValue="91">
                <option value="91">91 Nets</option>
              </SelectField>
              <Swatch />
              <FieldCaret />
            </SelectBox>
            <TagButton type="button" aria-label="Attributes" aria-pressed="true"><Icon name="tag" /></TagButton>
          </LayerGroup>
          <SectionRule />
          <Grip />
          <ButtonGroup $gap={34}>{simulationTools.map((t) => <ToolbarTool key={t.icon} {...t} />)}</ButtonGroup>
        </ParameterBar>

        <Workspace>
          <Palette aria-label="Drawing tools">
            <PaletteGrip />
            {paletteGroups.map((group, i) => (
              <PaletteGroup key={i}>{group.map((t) => <PaletteTool key={t.icon} {...t} />)}</PaletteGroup>
            ))}
          </Palette>
          <Editor>
            <CommandRow>
              <Coordinates>0.1 inch (−16.5 9.9)</Coordinates>
              <CommandBox>
                <CommandInput type="text" aria-label="Command line" />
                <FieldCaret />
              </CommandBox>
            </CommandRow>
            <Viewport>
              <Canvas><Schematic /></Canvas>
              <VerticalTrack><Thumb $vertical /></VerticalTrack>
              <HorizontalTrack><Thumb /></HorizontalTrack>
            </Viewport>
          </Editor>
        </Workspace>

        <StatusBar>
          <StatusText>Left-click &amp; drag to define group (or left-click to start defining a group polygon)</StatusText>
          <Icon name="bolt" />
          <Icon name="alert" />
        </StatusBar>
      </Window>
    </Desktop>
  );
}
